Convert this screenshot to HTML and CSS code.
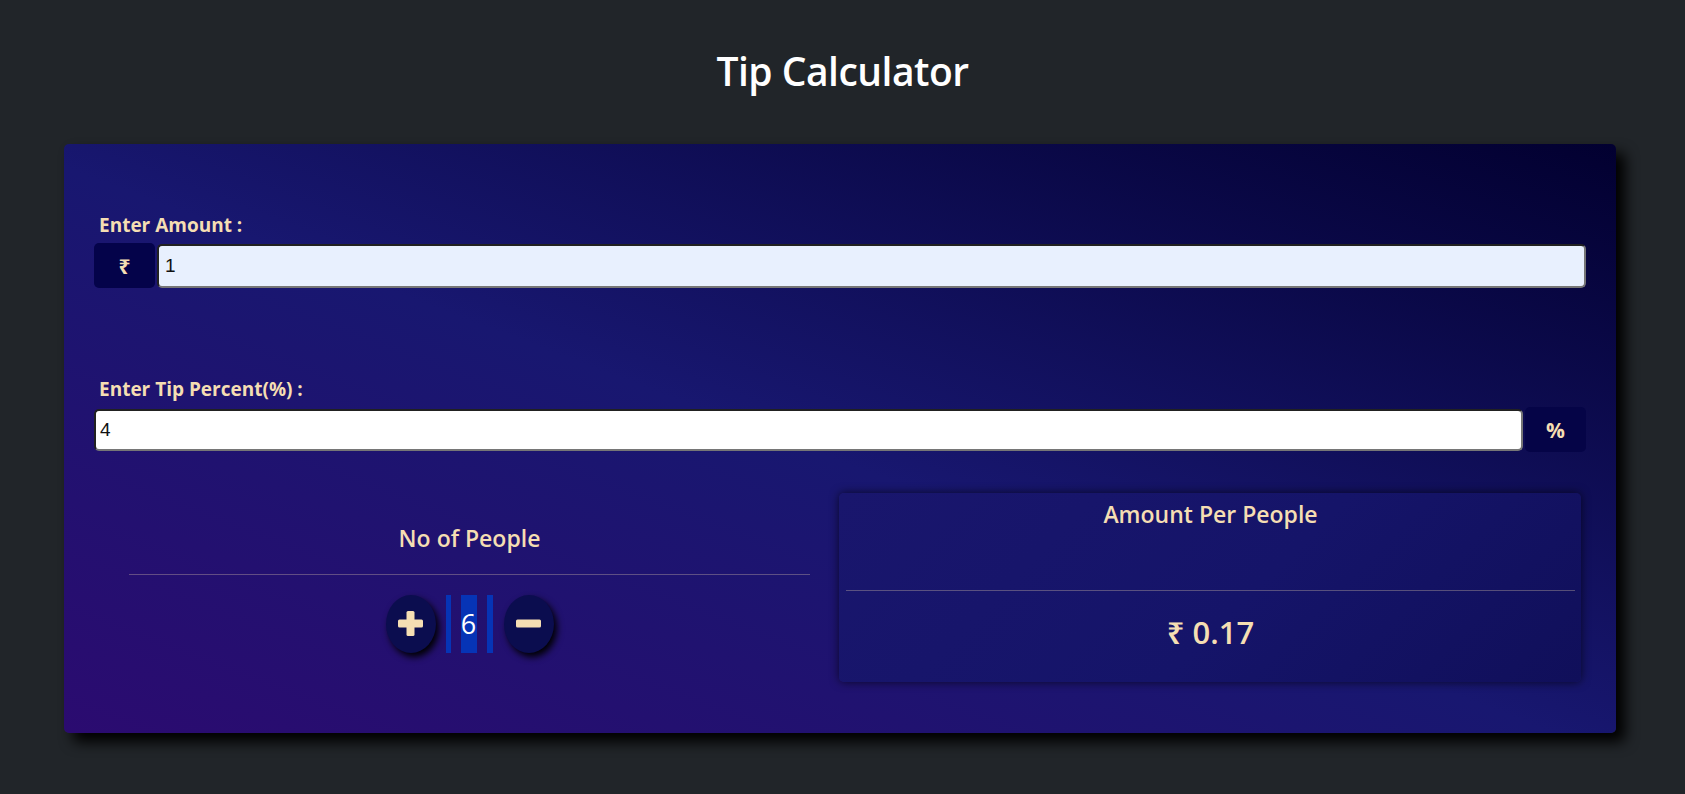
FILE: index.html
```html
<!DOCTYPE html>
<html lang="en">
<head>
<meta charset="utf-8">
<title>Tip Calculator</title>
<link rel="stylesheet" href="styles.css">
</head>
<body>
  <h1 class="title">Tip Calculator</h1>
  <main class="card">
    <div class="field field-amount">
      <label class="label" for="amount">Enter Amount :</label>
      <div class="group">
        <span class="addon addon-left">₹</span>
        <input id="amount" class="input input-amount" type="text" value="1">
      </div>
    </div>
    <div class="field field-tip">
      <label class="label" for="tip">Enter Tip Percent(%) :</label>
      <div class="group">
        <input id="tip" class="input input-tip" type="text" value="4">
        <span class="addon addon-right">%</span>
      </div>
    </div>
    <div class="bottom">
      <section class="people">
        <h3 class="heading">No of People</h3>
        <hr class="rule">
        <div class="counter">
          <button class="round" type="button" aria-label="Increase">
            <svg width="25" height="25" viewBox="0 0 25 25"><rect x="8.5" y="0" width="8" height="25" rx="1.5" fill="#f5deb3"/><rect x="0" y="8.5" width="25" height="8" rx="1.5" fill="#f5deb3"/></svg>
          </button>
          <div class="count-wrap"><span class="count">6</span></div>
          <button class="round" type="button" aria-label="Decrease">
            <svg width="25" height="25" viewBox="0 0 25 25"><rect x="0" y="8.5" width="25" height="8" rx="1.5" fill="#f5deb3"/></svg>
          </button>
        </div>
      </section>
      <section class="result">
        <h3 class="heading">Amount Per People</h3>
        <hr class="rule rule-result">
        <div class="value">₹ 0.17</div>
      </section>
    </div>
  </main>
</body>
</html>
```
FILE: styles.css
```css
* { box-sizing: border-box; }

html, body {
  margin: 0;
  padding: 0;
}

body {
  background: #212529;
  font-family: "Open Sans", "Noto Sans", sans-serif;
  color: #f5deb3;
  min-height: 794px;
}

.title {
  margin: 0;
  padding-top: 47px;
  height: 144px;
  text-align: center;
  color: #ffffff;
  font-size: 39px;
  font-weight: 600;
  letter-spacing: -0.5px;
  line-height: 48px;
}

.card {
  margin: 0 69px 0 64px;
  height: 589px;
  padding: 67px 30px 0 30px;
  border-radius: 5px;
  background: linear-gradient(to top right, #2b0b70 0%, #181770 48%, #020030 100%);
  box-shadow: 9px 9px 14px #000;
}

.label {
  display: block;
  padding-left: 5px;
  font-size: 19px;
  font-weight: 700;
  line-height: 28px;
  color: #f5deb3;
}

.field-amount .label { margin-bottom: 4px; }
.field-tip { margin-top: 87px; }
.field-tip .label { margin-bottom: 4px; }

.group {
  display: flex;
  align-items: center;
  height: 45px;
}

.addon {
  flex: 0 0 61px;
  height: 45px;
  border-radius: 5px;
  background: #04034a;
  color: #f5deb3;
  font-weight: 700;
  font-size: 21px;
  display: flex;
  align-items: center;
  justify-content: center;
}

.addon-left { margin-right: 2px; }
.addon-right { margin-left: 2px; background: #050447; }

.input {
  flex: 1 1 auto;
  min-width: 0;
  border: 2px inset #767676;
  border-radius: 5px;
  font-family: "Liberation Sans", Arial, sans-serif;
  font-size: 19px;
  color: #111;
  padding: 0 6px;
  outline: none;
}

.input-amount {
  height: 44px;
  margin-top: 1px;
  background: #e8f0fe;
}

.input-tip {
  height: 42px;
  background: #ffffff;
  padding-left: 4px;
}

.bottom {
  margin-top: 41px;
  margin-right: 5px;
  display: grid;
  grid-template-columns: 1fr 742px;
  align-items: center;
}

.people {
  padding: 3px 29px 0 35px;
  text-align: center;
}

.heading {
  margin: 0;
  font-size: 23px;
  font-weight: 600;
  line-height: 1.2;
  color: #f5deb3;
  text-align: center;
}

.rule {
  margin: 21px 0 20px;
  border: 0;
  border-top: 1px solid rgba(245, 222, 179, 0.3);
}

.counter {
  display: flex;
  justify-content: center;
  align-items: center;
  height: 58px;
}

.round {
  width: 50px;
  height: 58px;
  padding: 0;
  border: 0;
  border-radius: 50%;
  background: #0b0d4f;
  box-shadow: 3px 4px 7px #000;
  display: flex;
  align-items: center;
  justify-content: center;
}

.count-wrap {
  margin: 0 11px 0 10px;
  height: 58px;
  border-left: 5px solid #0634b6;
  border-right: 6px solid #0634b6;
  padding: 0 10px;
}

.count {
  display: block;
  width: 16px;
  height: 58px;
  background: #0634b6;
  color: #fff;
  font-size: 27px;
  line-height: 58px;
  text-align: center;
}

.result {
  height: 189px;
  padding: 8px 6px 0 7px;
  border-radius: 5px;
  background: linear-gradient(135deg, #19166d 0%, #151469 55%, #100f5a 100%);
  box-shadow: 0 0 10px rgba(0, 0, 0, 0.65);
}

.rule-result {
  margin: 61px 0 23px;
}

.value {
  text-align: center;
  font-size: 31px;
  font-weight: 600;
  line-height: 1.2;
  color: #f5deb3;
}
```
